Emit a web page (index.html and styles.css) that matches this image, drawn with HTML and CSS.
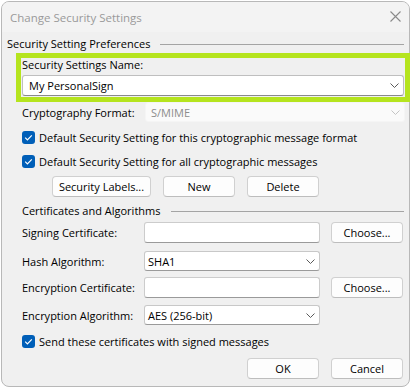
FILE: index.html
```html
<!DOCTYPE html>
<html>
<head>
<meta charset="utf-8">
<link rel="stylesheet" href="styles.css">
</head>
<body>
<div class="window">
  <div class="titlebar">
    <span class="title">Change Security Settings</span>
    <svg class="close" width="11" height="11" viewBox="0 0 11 11"><path d="M0.5 0.5 L10.5 10.5 M10.5 0.5 L0.5 10.5" stroke="#8a8a8a" stroke-width="1.1" fill="none"/></svg>
  </div>
  <div class="content">
    <div class="group-head g1"><span>Security Setting Preferences</span><div class="rule"></div></div>
    <div class="highlight">
      <div class="name-label">Security Settings Name:</div>
      <div class="select wide"><span>My PersonalSign</span><svg class="chev" width="9" height="5" viewBox="0 0 9 5"><path d="M0.5 0.5 L4.5 4.5 L8.5 0.5" stroke="#5a5a5a" fill="none"/></svg></div>
    </div>
    <div class="row crypto">
      <span class="lbl">Cryptography Format:</span>
      <div class="select disabled"><span>S/MIME</span><svg class="chev" width="9" height="5" viewBox="0 0 9 5"><path d="M0.5 0.5 L4.5 4.5 L8.5 0.5" stroke="#c4c4c4" fill="none"/></svg></div>
    </div>
    <div class="check c1"><span class="box"><svg width="13" height="13" viewBox="0 0 13 13"><path d="M3.2 6.6 L5.4 8.8 L9.8 4.3" stroke="#fff" stroke-width="1.2" fill="none"/></svg></span><span class="ctext">Default Security Setting for this cryptographic message format</span></div>
    <div class="check c2"><span class="box"><svg width="13" height="13" viewBox="0 0 13 13"><path d="M3.2 6.6 L5.4 8.8 L9.8 4.3" stroke="#fff" stroke-width="1.2" fill="none"/></svg></span><span class="ctext">Default Security Setting for all cryptographic messages</span></div>
    <div class="btnrow">
      <button class="btn labels">Security Labels...</button>
      <button class="btn w72">New</button>
      <button class="btn w72">Delete</button>
    </div>
    <div class="group-head g2"><span>Certificates and Algorithms</span><div class="rule"></div></div>
    <div class="row form r1">
      <span class="lbl">Signing Certificate:</span>
      <div class="input"></div>
      <button class="btn w72 choose">Choose...</button>
    </div>
    <div class="row form r2">
      <span class="lbl">Hash Algorithm:</span>
      <div class="select small"><span>SHA1</span><svg class="chev" width="9" height="5" viewBox="0 0 9 5"><path d="M0.5 0.5 L4.5 4.5 L8.5 0.5" stroke="#5a5a5a" fill="none"/></svg></div>
    </div>
    <div class="row form r3">
      <span class="lbl">Encryption Certificate:</span>
      <div class="input"></div>
      <button class="btn w72 choose">Choose...</button>
    </div>
    <div class="row form r4">
      <span class="lbl">Encryption Algorithm:</span>
      <div class="select small"><span>AES (256-bit)</span><svg class="chev" width="9" height="5" viewBox="0 0 9 5"><path d="M0.5 0.5 L4.5 4.5 L8.5 0.5" stroke="#5a5a5a" fill="none"/></svg></div>
    </div>
    <div class="check c3"><span class="box"><svg width="13" height="13" viewBox="0 0 13 13"><path d="M3.2 6.6 L5.4 8.8 L9.8 4.3" stroke="#fff" stroke-width="1.2" fill="none"/></svg></span><span class="ctext">Send these certificates with signed messages</span></div>
    <div class="footer">
      <button class="btn w72">OK</button>
      <button class="btn w72">Cancel</button>
    </div>
  </div>
</div>
</body>
</html>
```
FILE: styles.css
```css
html, body {
  margin: 0;
  padding: 0;
  background: #ffffff;
}
body {
  font-family: "Open Sans", "Noto Sans", sans-serif;
  font-size: 11px;
  color: #1a1a1a;
}
.window {
  margin: 1px 0 0 1px;
  width: 409px;
  height: 386px;
  box-sizing: border-box;
  border: 1px solid #b8b8b8;
  border-radius: 8px;
  background: #f0f0f0;
}
.titlebar {
  height: 30px;
  display: flex;
  align-items: center;
  justify-content: space-between;
  padding: 0 8px 0 8px;
  background: #f3f3f3;
  border-radius: 7px 7px 0 0;
}
.title {
  color: #9a9a9a;
  font-size: 11.5px;
}
.close {
  display: block;
  margin-top: -1px;
}
.content {
  padding-top: 4px;
}
.group-head {
  display: flex;
  align-items: center;
  height: 16px;
  line-height: 16px;
  color: #000;
}
.group-head .rule {
  flex: 1;
  height: 1px;
  background: #a4a4a4;
  margin-left: 10px;
  margin-right: 5px;
}
.g1 { padding-left: 5px; }
.g2 { padding-left: 20px; margin-top: 6px; }
.highlight {
  margin: 1px -1px 0 14px;
  border: 5px solid #b5e41e;
  padding: 0 1px 1px 1px;
}
.name-label {
  height: 13px;
  line-height: 13px;
  margin-bottom: 4px;
  color: #000;
}
.select {
  box-sizing: border-box;
  height: 20px;
  background: #ffffff;
  border: 1px solid #c8c8c8;
  border-radius: 3px;
  display: flex;
  align-items: center;
  justify-content: space-between;
  padding: 0 4px 0 3px;
  color: #000;
}
.select.wide {
  height: 21px;
  padding: 0 4px 0 6px;
  border-color: #bfbfbf;
  border-bottom-color: #8a8a8a;
}
.select.small {
  width: 176px;
  border-bottom-color: #9a9a9a;
}
.select.disabled {
  background: #fafafa;
  border-color: #f5f5f5;
  color: #8c8c8c;
  padding-left: 5px;
}
.chev { display: block; }
.row {
  display: grid;
  align-items: center;
  padding-left: 20px;
  color: #000;
}
.crypto {
  grid-template-columns: 123px 1fr;
  padding-right: 4px;
}
.form {
  grid-template-columns: 122px 176px 83px;
}
.choose {
  justify-self: end;
}
.input {
  box-sizing: border-box;
  height: 21px;
  background: #fff;
  border: 1px solid #cccccc;
  border-bottom-color: #9a9a9a;
  border-radius: 3px;
}
.r1 { margin-top: 3px; }
.r2 { margin-top: 8px; }
.r3 { margin-top: 6px; }
.r4 { margin-top: 7px; }
.check {
  display: flex;
  align-items: center;
  height: 13px;
  padding-left: 20px;
  color: #000;
}
.c1 { margin-top: 9px; }
.c2 { margin-top: 11px; }
.c3 { margin-top: 10px; }
.box {
  width: 13px;
  height: 13px;
  background: #005fb8;
  border-radius: 3px;
  display: block;
}
.box svg { display: block; }
.ctext { margin-left: 4px; }
.btn {
  box-sizing: border-box;
  height: 21px;
  background: #fdfdfd;
  border: 1px solid #d0d0d0;
  border-bottom-color: #bdbdbd;
  border-radius: 4px;
  font: inherit;
  color: #000;
  padding: 0;
  margin: 0;
}
.w72 { width: 72px; }
.labels { width: 99px; }
.btnrow {
  display: flex;
  gap: 12px;
  padding-left: 50px;
  margin-top: 8px;
}
.footer {
  display: flex;
  justify-content: flex-end;
  gap: 12px;
  padding-right: 6px;
  margin-top: 10px;
}
```
